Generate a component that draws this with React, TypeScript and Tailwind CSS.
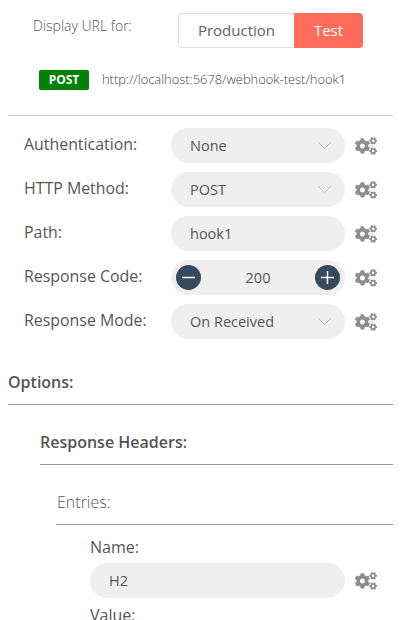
import React from "react";
import { FaCogs } from "react-icons/fa";

const Cog = () => (
  <div className="w-[22px] ml-[10px] text-[#8d8d8d] text-[22px] flex items-center justify-center shrink-0">
    <FaCogs />
  </div>
);

const Chevron = () => (
  <svg width="15" height="9" viewBox="0 0 15 9" fill="none" className="shrink-0">
    <path d="M1 1l6.5 6.5L14 1" stroke="#c0c4cc" strokeWidth="1" />
  </svg>
);

const Pill: React.FC<{ text: string; select?: boolean; className?: string }> = ({
  text,
  select,
  className,
}) => (
  <div
    className={`h-[35px] bg-[#efefef] rounded-[18px] flex items-center justify-between pl-[19px] pr-[13px] text-[14.5px] text-[#555] ${className}`}
  >
    <span>{text}</span>
    {select && <Chevron />}
  </div>
);

const Row: React.FC<{ label: string; children: React.ReactNode }> = ({ label, children }) => (
  <div className="flex items-center h-[35px] mb-[9px] pl-[24px]">
    <div className="w-[147px] pb-[1px] text-[15.9px] text-[#555] shrink-0">{label}</div>
    <div className="w-[174px] shrink-0">{children}</div>
    <Cog />
  </div>
);

const RoundBtn: React.FC<{ plus?: boolean }> = ({ plus }) => (
  <div className="w-[25px] h-[25px] rounded-full bg-[#354a5f] flex items-center justify-center">
    <svg width="13" height="13" viewBox="0 0 13 13" stroke="#fff" strokeWidth="1.5">
      <path d="M0 6.5h13" />
      {plus && <path d="M6.5 0v13" />}
    </svg>
  </div>
);

export default function App() {
  return (
    <div className="w-[403px] h-[620px] overflow-hidden bg-white font-['Open_Sans',sans-serif] text-[#555]">
      <div className="flex pt-[13px] h-[70px]">
        <div className="w-[178px] pl-[33px] pt-[2px] text-[14px] font-light text-[#555]">Display URL for:</div>
        <div className="flex h-[35px] w-[185px] rounded-[4px] overflow-hidden">
          <div className="w-[116px] border border-r-0 border-[#dcdfe6] rounded-l-[4px] flex items-center justify-center text-[15px] text-[#606266]">
            Production
          </div>
          <div className="w-[69px] bg-[#ff6d5a] text-white flex items-center justify-center text-[15px]">Test</div>
        </div>
      </div>
      <div className="flex items-center h-[20px] pl-[39px]">
        <div className="w-[50px] h-[20px] rounded-[2px] bg-[#008000] text-white text-[12px] font-bold flex items-center justify-center">
          POST
        </div>
        <div className="ml-[13px] text-[12.9px] font-light text-[#444]">http://localhost:5678/webhook-test/hook1</div>
      </div>
      <div className="mt-[25px] ml-[8px] mr-[10px] border-t border-[#c8c8c8]" />
      <div className="pt-[12px]">
        <Row label="Authentication:">
          <Pill text="None" select />
        </Row>
        <Row label="HTTP Method:">
          <Pill text="POST" select />
        </Row>
        <Row label="Path:">
          <Pill text="hook1" />
        </Row>
        <Row label="Response Code:">
          <div className="h-[35px] bg-[#efefef] rounded-[18px] flex items-center justify-between px-[5px] text-[14.5px] text-[#555]">
            <RoundBtn />
            <span>200</span>
            <RoundBtn plus />
          </div>
        </Row>
        <Row label="Response Mode:">
          <Pill text="On Received" select />
        </Row>
      </div>
      <div className="pl-[8px] pr-[10px] mt-[32px]">
        <div className="text-[16px] font-semibold leading-[22px] text-[#555] pb-[11px] border-b border-[#999]">Options:</div>
      </div>
      <div className="pl-[40px] pr-[10px] mt-[26px]">
        <div className="text-[16px] font-semibold leading-[22px] text-[#555] pb-[11px] border-b border-[#999]">
          Response Headers:
        </div>
      </div>
      <div className="pl-[56px] pr-[10px] mt-[26px]">
        <div className="text-[16px] font-light leading-[22px] text-[#555] pb-[11px] pl-px border-b border-[#999]">Entries:</div>
      </div>
      <div className="pl-[90px] pt-[11px]">
        <div className="text-[16px] leading-[22px] text-[#555] mb-[5px]">Name:</div>
        <div className="flex items-center">
          <Pill text="H2" className="w-[255px]" />
          <Cog />
        </div>
        <div className="text-[16px] leading-[22px] text-[#555] mt-[6px]">Value:</div>
      </div>
    </div>
  );
}
